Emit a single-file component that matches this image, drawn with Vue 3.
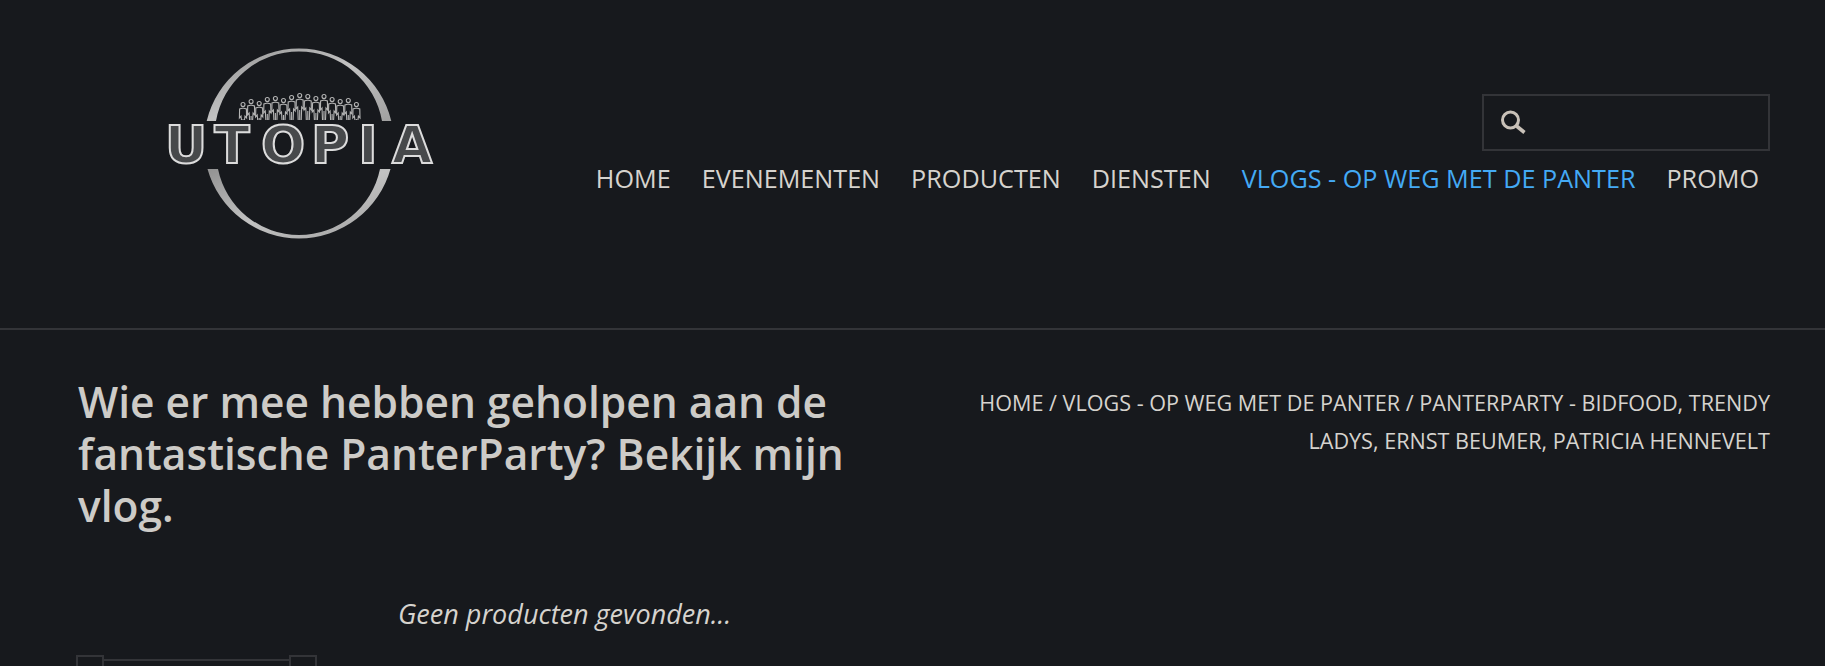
<script setup>
// skyline of people on top of the logo
const tops = [102, 99, 101, 97, 96, 98, 95, 93, 94, 96, 94, 97, 99, 98, 102];
const people = tops.map((top, i) => ({ x: 243 + i * 8.1, top }));

function bodyPath(p) {
  const x = p.x;
  const s = p.top + 6;
  return `M${x - 1.5} 120L${x - 2} ${s + 8}L${x - 3.6} ${s + 10}L${x - 3.4} ${s + 1}L${x} ${s}L${x + 3.4} ${s + 1}L${x + 3.6} ${s + 10}L${x + 2} ${s + 8}L${x + 1.5} 120M${x} 120V${s + 11}`;
}

const navItems = [
  { label: "HOME" },
  { label: "EVENEMENTEN" },
  { label: "PRODUCTEN" },
  { label: "DIENSTEN" },
  { label: "VLOGS - OP WEG MET DE PANTER", active: true },
  { label: "PROMO" },
];
</script>

<template>
  <div class="page">
    <header class="site-header">
      <svg class="logo" viewBox="165 45 275 200" width="275" height="200">
        <defs>
          <linearGradient id="ring" x1="0" y1="0" x2="1" y2="1">
            <stop offset="0" stop-color="#929292" />
            <stop offset="0.5" stop-color="#c2c2c2" />
            <stop offset="1" stop-color="#a0a0a0" />
          </linearGradient>
          <filter id="soft" x="-5%" y="-5%" width="110%" height="110%">
            <feGaussianBlur stdDeviation="0.6" />
          </filter>
        </defs>
        <g filter="url(#soft)">
          <path d="M206.7 121A95 95 0 0 1 391.3 121H382A84.3 84.3 0 0 0 216 121Z" fill="url(#ring)" />
          <path d="M207.5 169A95 95 0 0 0 390.5 169H380A82.7 82.7 0 0 1 218 169Z" fill="url(#ring)" />
          <g fill="none" stroke="#b4b4b4" stroke-width="1.1">
            <g v-for="p in people" :key="p.x">
              <circle :cx="p.x" :cy="p.top + 2.5" r="2" />
              <path :d="bodyPath(p)" />
            </g>
          </g>
          <text class="logo-text" x="186 232 283 330 368 412" y="163">UTOPIA</text>
        </g>
      </svg>

      <div class="header-right">
        <div class="search">
          <svg width="26" height="24" viewBox="0 0 26 24">
            <circle cx="10.5" cy="10" r="8" fill="none" stroke="#c9c1b8" stroke-width="3" />
            <path d="M16.5 16L24.5 22.5" stroke="#c9c1b8" stroke-width="3.6" fill="none" />
          </svg>
        </div>
        <nav class="nav">
          <a v-for="item in navItems" :key="item.label" :class="{ active: item.active }">{{ item.label }}</a>
        </nav>
      </div>
    </header>

    <main class="content">
      <div class="title-row">
        <h1>Wie er mee hebben geholpen aan de fantastische PanterParty? Bekijk mijn vlog.</h1>
        <div class="breadcrumb">
          HOME / VLOGS - OP WEG MET DE PANTER / PANTERPARTY - BIDFOOD, TRENDY LADYS, ERNST BEUMER, PATRICIA HENNEVELT
        </div>
      </div>

      <div class="shop-row">
        <aside class="sidebar">
          <div class="slider">
            <span class="handle left"></span>
            <span class="handle right"></span>
          </div>
        </aside>
        <p class="empty">Geen producten gevonden...</p>
      </div>
    </main>
  </div>
</template>

<style>
html,
body {
  margin: 0;
  background: #17191d;
  overflow: hidden;
}
</style>

<style scoped>
.page {
  height: 666px;
  overflow: hidden;
  background: #17191d;
  font-family: "Open Sans", sans-serif;
  color: #d6d3ce;
}

.site-header {
  display: flex;
  justify-content: space-between;
  height: 328px;
  border-bottom: 2px solid #333438;
  padding: 0 55px 0 165px;
}

.logo {
  display: block;
  margin-top: 45px;
}

.logo-text {
  font-family: "DejaVu Sans", sans-serif;
  font-size: 52px;
  font-weight: 700;
  text-anchor: middle;
  fill: #47484c;
  stroke: #dcdcdc;
  stroke-width: 2;
}

.header-right {
  display: flex;
  flex-direction: column;
  align-items: flex-end;
  padding-top: 94px;
}

.search {
  box-sizing: border-box;
  width: 288px;
  height: 57px;
  border: 2px solid #333438;
  padding: 14px 0 0 16px;
}

.search svg {
  display: block;
}

.nav {
  display: flex;
  gap: 31px;
  margin-top: 9px;
  padding-right: 11px;
  font-size: 25.2px;
  line-height: 36px;
  white-space: nowrap;
}

.nav a.active {
  color: #44aaf5;
}

.content {
  padding: 46px 55px 0 78px;
}

.title-row {
  display: flex;
  justify-content: space-between;
}

h1 {
  width: 800px;
  margin: 0;
  font-size: 42.5px;
  line-height: 52px;
  font-weight: 600;
  color: #cdcbc7;
}

.breadcrumb {
  width: 820px;
  padding-top: 8px;
  font-size: 21.6px;
  line-height: 38px;
  text-align: right;
}

.shop-row {
  display: flex;
  margin-top: 64px;
}

.sidebar {
  width: 320px;
  flex: none;
  padding-top: 59px;
}

.slider {
  position: relative;
  box-sizing: border-box;
  width: 212px;
  height: 40px;
  margin-top: 4px;
  border-top: 2px solid #333438;
}

.handle {
  position: absolute;
  top: -6px;
  box-sizing: border-box;
  width: 28px;
  height: 40px;
  border: 2px solid #333438;
  background: #17191d;
}

.handle.left {
  left: -2px;
}

.handle.right {
  right: -27px;
}

.empty {
  margin: 0;
  font-size: 27px;
  line-height: 36px;
  font-style: italic;
}
</style>
